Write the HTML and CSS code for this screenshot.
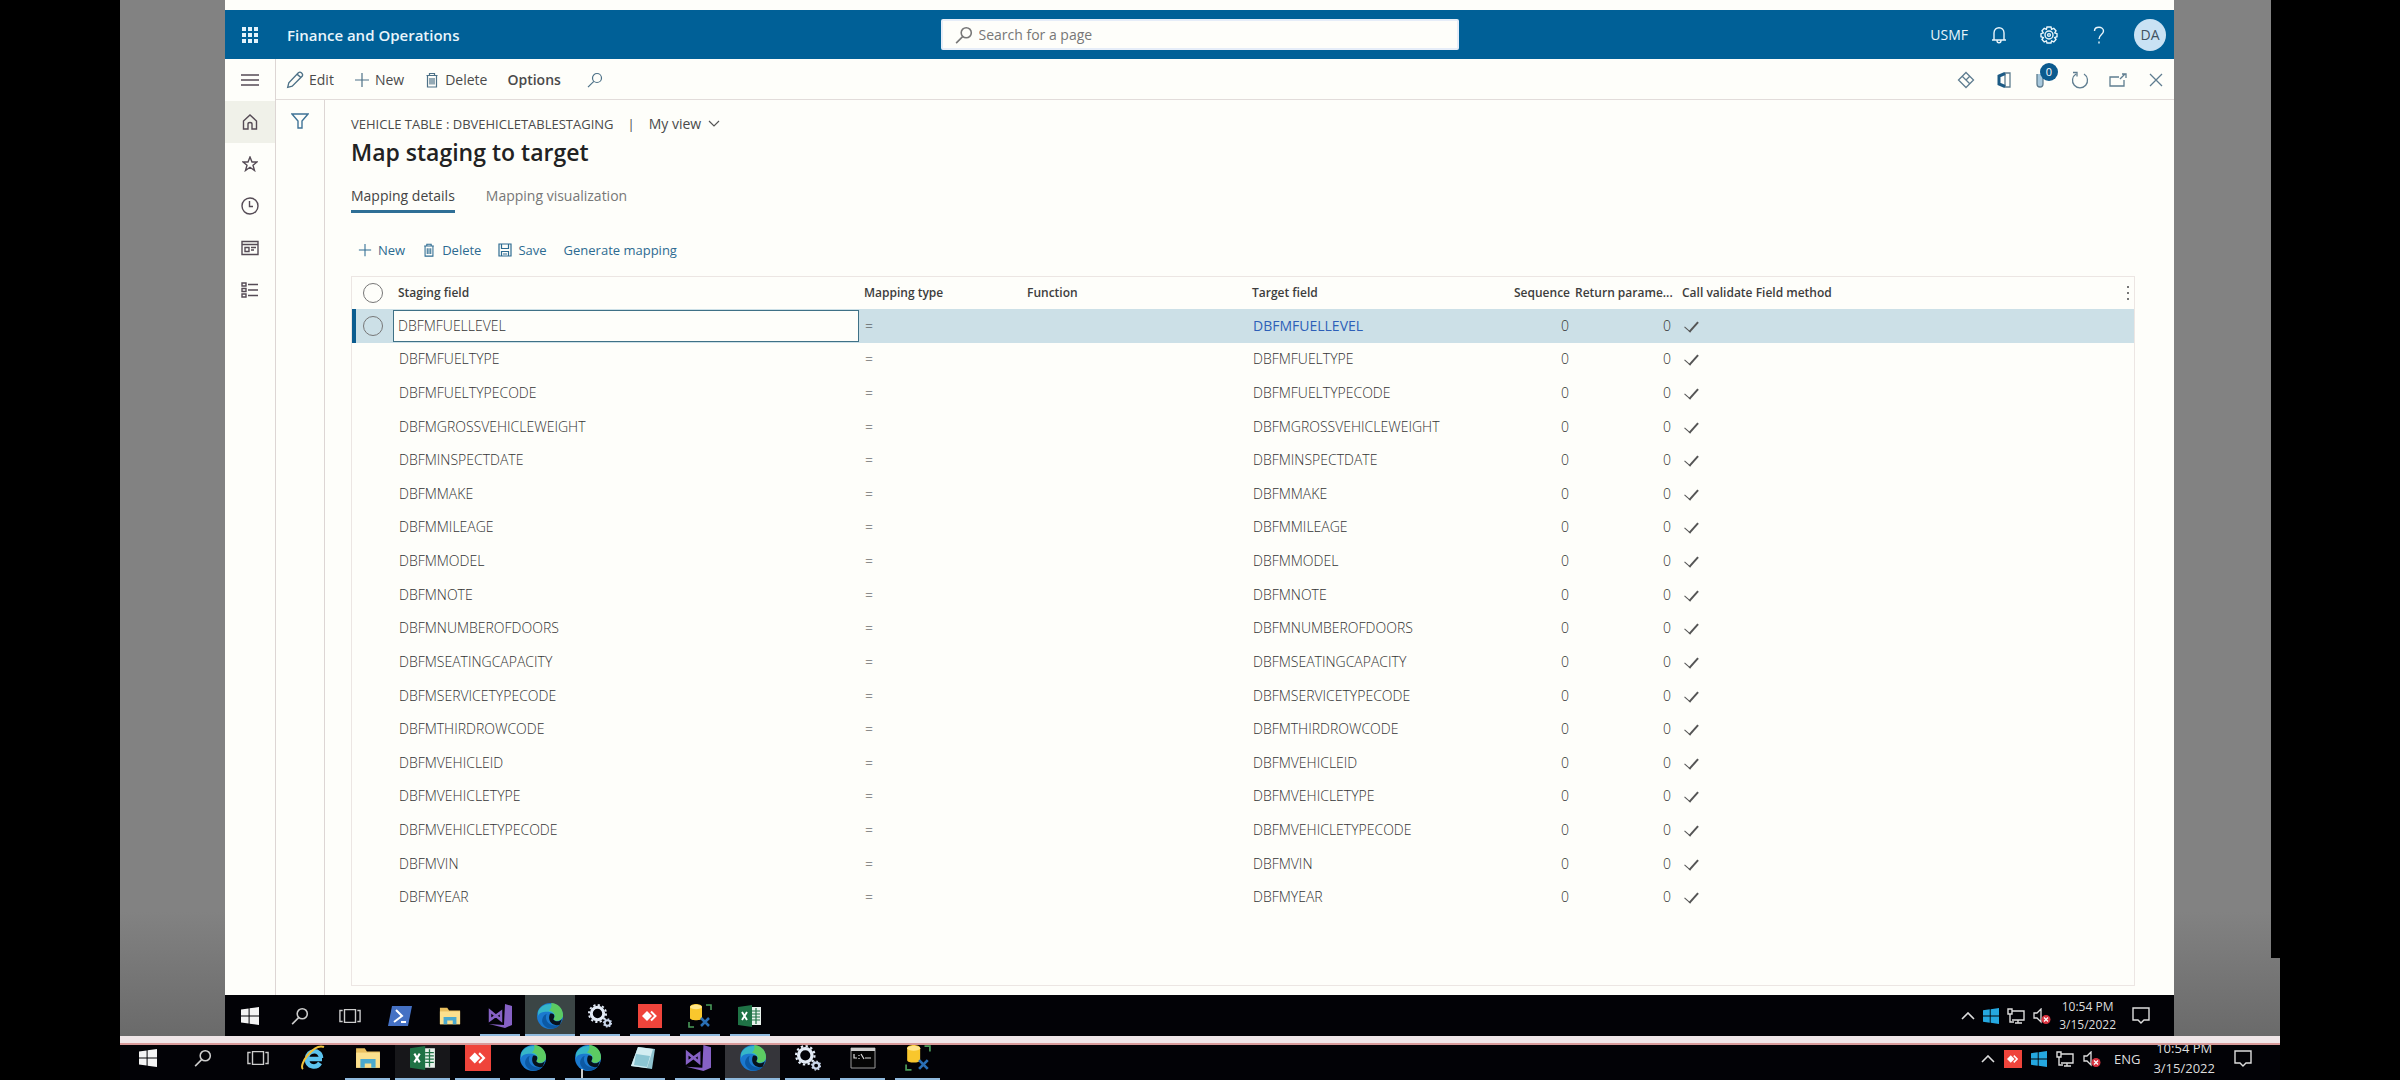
FILE: index.html
```html
<!DOCTYPE html>
<html lang="en">
<head>
<meta charset="utf-8">
<title>Map staging to target - Finance and Operations</title>
<link rel="stylesheet" href="styles.css">
</head>
<body>
<svg class="defs" aria-hidden="true">
  <symbol id="search" viewBox="0 0 16 16"><circle cx="10" cy="6" r="4.5"/><path d="M6.8 9.4 1 15.2"/></symbol>
  <symbol id="plus" viewBox="0 0 16 16"><path d="M8 1v14M1 8h14"/></symbol>
  <symbol id="trash" viewBox="0 0 16 16"><path d="M2.500 3.500h11M5.500 3.500v-2h5v2M3.500 3.500v11.500h9v-11.500M6 6v6.500M8 6v6.500M10 6v6.500"/></symbol>
  <symbol id="windows" viewBox="0 0 18 18"><path d="M0 2.500 7.600 1.400v7.100H0zM8.600 1.300 18 0v8.500H8.600zM0 9.500h7.600v7.100L0 15.500zM8.600 9.500H18V18l-9.400-1.300z"/></symbol>
  <symbol id="taskview" viewBox="0 0 24 18"><path d="M6 2h12v14H6zM4 3H1v12h3M20 3h3v12h-3" fill="none" stroke="#ccc" stroke-width="1.500"/></symbol>
  <symbol id="folder" viewBox="0 0 24 20"><path d="M1 1h8l2 3h12v15H1z" fill="#e9bf5f"/><path d="M1 5h22v14H1z" fill="#fbe08e"/><path d="M5 19v-8h14v8h-4v-4H9v4z" fill="#4aa9cf"/></symbol>
  <symbol id="vs" viewBox="0 0 24 24"><path d="M17 0l7 2v19l-7 3L1 20l15 1z" fill="#8661c5"/><path d="M2 7v9l11-8v8L2 7z" fill="none" stroke="#8661c5" stroke-width="2.500"/></symbol>
  <symbol id="edge" viewBox="0 0 24 24"><circle cx="12" cy="12" r="12" fill="#1b79cf"/><path d="M1 8C4-1 20-3 24 11c0 5-6 7-9 4 3-4-1-7-6-7-4 0-7 1-8 4z" fill="#35b6c8"/><path d="M13 0c6 0 11 5 11 11 0 5-6 7-9 4 3-3 1-7-4-8 2-2 3-4 2-7z" fill="#5ccb62"/><path d="M9 10c-3 6 3 13 12 10-5 6-14 4-16-2-1-3 1-7 4-8z" fill="#0c59a4"/><path d="M12 10c4-1 5 2 3 5 2 3 6 2 8 0l-2 5c-6 2-12-3-9-10z" fill="#07121c"/></symbol>
  <symbol id="gears" viewBox="0 0 24 24"><circle cx="9.500" cy="9.500" r="6.200" fill="none" stroke="#e3ebf6" stroke-width="3"/><circle cx="9.500" cy="9.500" r="8.500" fill="none" stroke="#e3ebf6" stroke-width="2" stroke-dasharray="2.200 2.250"/><circle cx="19.500" cy="19" r="2.800" fill="none" stroke="#c9d6ea" stroke-width="2"/><circle cx="19.500" cy="19" r="4" fill="none" stroke="#c9d6ea" stroke-width="1.400" stroke-dasharray="1.500 1.600"/></symbol>
  <symbol id="anydesk" viewBox="0 0 24 24"><path d="M0 0h24v24H0z" fill="#ef443b"/><path d="M4 12l5-5 5 5-5 5z" fill="#fff"/><path d="M13 7.500l4.500 4.500-4.500 4.500" fill="none" stroke="#fff" stroke-width="2"/></symbol>
  <symbol id="sql" viewBox="0 0 24 24"><path d="M2 3c0-4 12-4 12 0v11c0 3-12 3-12 0z" fill="#f9c72d"/><ellipse cx="8" cy="3" rx="6" ry="2.200" fill="#ffe58a"/><path d="M18 1h5v5M1 18v5h5" fill="none" stroke="#4b9a5a" stroke-width="1.600"/><path d="M13 14l8 8M21 14l-8 8" stroke="#2a6fb5" stroke-width="2.500"/></symbol>
  <symbol id="excel" viewBox="0 0 24 22"><path d="M13 2h10v18H13z" fill="#e8f2ec"/><path d="M14 6h8M14 9h8M14 12h8M14 15h8M18 3v16" stroke="#1f7245" stroke-width="1.200"/><path d="M0 2 14 0v22L0 20z" fill="#1f7245"/><path d="M4 7l5 8M9 7l-5 8" stroke="#fff" stroke-width="1.900"/></symbol>
  <symbol id="network" viewBox="0 0 18 16"><path d="M5 3h12v9H5M8 15h7M11 12v3M1 1h4v5H1zM3 6v8h4" fill="none" stroke="#ddd" stroke-width="1.400"/></symbol>
  <symbol id="mute" viewBox="0 0 18 16"><path d="M1 5h3l4-4v13L4 10H1z" fill="none" stroke="#ddd" stroke-width="1.300"/><circle cx="13" cy="11.500" r="4.500" fill="#d8323f"/><path d="M11 9.500l4 4M15 9.500l-4 4" stroke="#fff" stroke-width="1.200"/></symbol>
  <symbol id="up" viewBox="0 0 14 8"><path d="M1 7l6-6 6 6" fill="none" stroke="#ddd" stroke-width="1.600"/></symbol>
  <symbol id="note" viewBox="0 0 18 17"><path d="M1 1h16v12h-5l-3 3-3-3H1z" fill="none" stroke="#ddd" stroke-width="1.400"/></symbol>
</svg>

<div class="screen">
  <div class="desk">
    <div class="notch"></div>
    <div class="remote">
      <div class="chrome"></div>
      <header class="top">
        <div class="brand">
          <button class="waffle" aria-label="Apps"><svg width="18" height="18" viewBox="0 0 18 18"><path d="M3 1v16M9 1v16M15 1v16" stroke="#e4f3fb" stroke-width="4" stroke-dasharray="4 2"/></svg></button>
          <span class="name">Finance and Operations</span>
        </div>
        <label class="find">
          <svg class="line" width="18" height="18"><use href="#search"/></svg>
          <input type="text" placeholder="Search for a page" aria-label="Search for a page">
        </label>
        <div class="account">
          <button class="company">USMF</button>
          <button class="hicon" aria-label="Notifications"><svg width="16" height="18" viewBox="0 0 16 18"><path d="M1 14h14M3 14V7c0-7 10-7 10 0v7M6 14.500c0 3 4 3 4 0"/></svg></button>
          <button class="hicon" aria-label="Settings"><svg width="18" height="18" viewBox="0 0 18 18"><path d="M7 1h4l.6 2.300 2.200-1L16 4.800l-1.300 2 2.300.9v3l-2.300.8 1.300 2-2.200 2.400-2.200-1L11 17H7l-.6-2.100-2.200 1L2 13.500l1.300-2L1 10.700v-3l2.300-.9-1.300-2 2.200-2.500 2.200 1z"/><circle cx="9" cy="9" r="4"/><circle cx="9" cy="9" r="1.400"/></svg></button>
          <button class="hicon" aria-label="Help"><svg width="12" height="18" viewBox="0 0 12 18"><path d="M1.500 5c0-5 9-5 9 0 0 3.500-4.500 3.500-4.500 8M6 15.500v2"/></svg></button>
          <button class="avatar">DA</button>
        </div>
      </header>

      <div class="body">
        <nav class="rail">
          <button class="burger" aria-label="Expand"><svg width="18" height="12" viewBox="0 0 18 12"><path d="M0 1h18M0 6h18M0 11h18"/></svg></button>
          <button class="on" aria-label="Home"><svg width="16" height="16" viewBox="0 0 16 16"><path d="M1.500 7 8 1l6.500 6v8H10v-5c0-2-4-2-4 0v5H1.500z"/></svg></button>
          <button aria-label="Favorites"><svg width="16" height="16" viewBox="0 0 16 16"><path d="M8 1l2 5h5l-4 3.200 1.500 5.300L8 11.300 3.500 14.500 5 9.200 1 6h5z"/></svg></button>
          <button aria-label="Recent"><svg width="18" height="18" viewBox="0 0 18 18"><circle cx="9" cy="9" r="8"/><path d="M8.500 4v5.500H12"/></svg></button>
          <button aria-label="Workspaces"><svg width="18" height="16" viewBox="0 0 18 16"><path d="M1 1.500h16v13H1zM1 4.500h16M4 7.500h4v4H4zM10 7.500h5M10 10h3"/></svg></button>
          <button aria-label="Modules"><svg width="18" height="16" viewBox="0 0 18 16"><path d="M1 1h4v3H1zM1 6.500h4v3H1zM1 12h4v3H1zM7 2.500h10M7 8h10M7 13.500h10"/></svg></button>
        </nav>

        <div class="work">
          <div class="actions">
            <button class="act"><svg width="18" height="18" viewBox="0 0 16 16"><path d="M1.500 14.500l1-4L11 1.500c2-1.500 4.500 1 3.500 3L5.500 13.500zM10 3l3.500 3"/></svg>Edit</button>
            <button class="act"><svg width="16" height="16"><use href="#plus"/></svg>New</button>
            <button class="act"><svg width="16" height="18"><use href="#trash"/></svg>Delete</button>
            <button class="act strong">Options</button>
            <button class="act" aria-label="Search"><svg width="16" height="16"><use href="#search"/></svg></button>
            <div class="tools">
              <button aria-label="Personalize"><svg width="18" height="18" viewBox="0 0 18 18"><path d="M9 1.500 16.500 9 9 16.500 1.500 9z"/><path d="M5.200 5.200l7.600 7.600M12.800 5.200 9 9"/></svg></button>
              <button aria-label="Office"><svg width="16" height="16" viewBox="0 0 16 16"><path d="M9 1h5v14H9z"/><path d="M9 1.500 3 4v8l6 2.500" stroke="#1c5a84" stroke-width="3"/></svg></button>
              <button class="attach" aria-label="Attachments"><svg width="14" height="18" viewBox="0 0 14 18"><path d="M2 3v10c0 4 6 4 6 0V3" fill="#a9c9dd"/></svg><span class="badge">0</span></button>
              <button aria-label="Refresh"><svg width="18" height="18" viewBox="0 0 18 18"><path d="M5 3a7.500 7.500 0 1 0 8 0M2 1.500h4v4"/></svg></button>
              <button aria-label="Open in new window"><svg width="18" height="14" viewBox="0 0 18 14"><path d="M10 4H1v9h14V7M11 6l5-5M13 1h4v4"/></svg></button>
              <button aria-label="Close"><svg width="14" height="14" viewBox="0 0 14 14"><path d="M1 1l12 12M13 1 1 13"/></svg></button>
            </div>
          </div>

          <div class="page">
            <aside class="filter"><button aria-label="Filter"><svg width="18" height="16" viewBox="0 0 18 16"><path d="M1 1h16l-6 7v7H7V8z"/></svg></button></aside>
            <main>
              <div class="crumb"><span>VEHICLE TABLE : DBVEHICLETABLESTAGING</span><span>|</span><button class="view">My view<svg width="12" height="8" viewBox="0 0 12 8"><path d="M1 1l5 5 5-5"/></svg></button></div>
              <h1>Map staging to target</h1>
              <div class="tabs" role="tablist">
                <button role="tab" aria-selected="true" class="tab sel">Mapping details</button>
                <button role="tab" aria-selected="false" class="tab">Mapping visualization</button>
              </div>
              <div class="gridbar">
                <button><svg width="14" height="14"><use href="#plus"/></svg>New</button>
                <button><svg width="14" height="16"><use href="#trash"/></svg>Delete</button>
                <button><svg width="14" height="14" viewBox="0 0 14 14"><path d="M1 1h12v12H1zM3.500 1v4.500h7V1M3.500 13V8.500h7V13M5 11h4"/></svg>Save</button>
                <button>Generate mapping</button>
              </div>
              <div class="grid">
                <table>
                  <colgroup><col class="c0"><col class="c1"><col class="c2"><col class="c3"><col class="c4"><col class="c5"><col class="c6"><col></colgroup>
                  <thead><tr><th><input type="checkbox" class="pick" aria-label="Select all"></th><th>Staging field</th><th>Mapping type</th><th>Function</th><th>Target field</th><th class="num">Sequence</th><th class="num">Return parame...</th><th><div class="last">Call validate Field method<button aria-label="Grid options"><svg width="2" height="14" viewBox="0 0 2 14"><path d="M1 0v14" stroke-width="2" stroke-dasharray="2 4"/></svg></button></div></th></tr></thead>
                  <tbody>
                    <tr class="cur"><td><input type="checkbox" class="pick" aria-label="Select row"></td><td class="edit"><input type="text" value="DBFMFUELLEVEL" aria-label="Staging field"></td><td>=</td><td></td><td><a href="#">DBFMFUELLEVEL</a></td><td class="num">0</td><td class="num">0</td><td><input type="checkbox" class="ok" checked aria-label="Call validate"></td></tr>
                    <tr><td></td><td>DBFMFUELTYPE</td><td>=</td><td></td><td>DBFMFUELTYPE</td><td class="num">0</td><td class="num">0</td><td><input type="checkbox" class="ok" checked aria-label="Call validate"></td></tr>
                    <tr><td></td><td>DBFMFUELTYPECODE</td><td>=</td><td></td><td>DBFMFUELTYPECODE</td><td class="num">0</td><td class="num">0</td><td><input type="checkbox" class="ok" checked aria-label="Call validate"></td></tr>
                    <tr><td></td><td>DBFMGROSSVEHICLEWEIGHT</td><td>=</td><td></td><td>DBFMGROSSVEHICLEWEIGHT</td><td class="num">0</td><td class="num">0</td><td><input type="checkbox" class="ok" checked aria-label="Call validate"></td></tr>
                    <tr><td></td><td>DBFMINSPECTDATE</td><td>=</td><td></td><td>DBFMINSPECTDATE</td><td class="num">0</td><td class="num">0</td><td><input type="checkbox" class="ok" checked aria-label="Call validate"></td></tr>
                    <tr><td></td><td>DBFMMAKE</td><td>=</td><td></td><td>DBFMMAKE</td><td class="num">0</td><td class="num">0</td><td><input type="checkbox" class="ok" checked aria-label="Call validate"></td></tr>
                    <tr><td></td><td>DBFMMILEAGE</td><td>=</td><td></td><td>DBFMMILEAGE</td><td class="num">0</td><td class="num">0</td><td><input type="checkbox" class="ok" checked aria-label="Call validate"></td></tr>
                    <tr><td></td><td>DBFMMODEL</td><td>=</td><td></td><td>DBFMMODEL</td><td class="num">0</td><td class="num">0</td><td><input type="checkbox" class="ok" checked aria-label="Call validate"></td></tr>
                    <tr><td></td><td>DBFMNOTE</td><td>=</td><td></td><td>DBFMNOTE</td><td class="num">0</td><td class="num">0</td><td><input type="checkbox" class="ok" checked aria-label="Call validate"></td></tr>
                    <tr><td></td><td>DBFMNUMBEROFDOORS</td><td>=</td><td></td><td>DBFMNUMBEROFDOORS</td><td class="num">0</td><td class="num">0</td><td><input type="checkbox" class="ok" checked aria-label="Call validate"></td></tr>
                    <tr><td></td><td>DBFMSEATINGCAPACITY</td><td>=</td><td></td><td>DBFMSEATINGCAPACITY</td><td class="num">0</td><td class="num">0</td><td><input type="checkbox" class="ok" checked aria-label="Call validate"></td></tr>
                    <tr><td></td><td>DBFMSERVICETYPECODE</td><td>=</td><td></td><td>DBFMSERVICETYPECODE</td><td class="num">0</td><td class="num">0</td><td><input type="checkbox" class="ok" checked aria-label="Call validate"></td></tr>
                    <tr><td></td><td>DBFMTHIRDROWCODE</td><td>=</td><td></td><td>DBFMTHIRDROWCODE</td><td class="num">0</td><td class="num">0</td><td><input type="checkbox" class="ok" checked aria-label="Call validate"></td></tr>
                    <tr><td></td><td>DBFMVEHICLEID</td><td>=</td><td></td><td>DBFMVEHICLEID</td><td class="num">0</td><td class="num">0</td><td><input type="checkbox" class="ok" checked aria-label="Call validate"></td></tr>
                    <tr><td></td><td>DBFMVEHICLETYPE</td><td>=</td><td></td><td>DBFMVEHICLETYPE</td><td class="num">0</td><td class="num">0</td><td><input type="checkbox" class="ok" checked aria-label="Call validate"></td></tr>
                    <tr><td></td><td>DBFMVEHICLETYPECODE</td><td>=</td><td></td><td>DBFMVEHICLETYPECODE</td><td class="num">0</td><td class="num">0</td><td><input type="checkbox" class="ok" checked aria-label="Call validate"></td></tr>
                    <tr><td></td><td>DBFMVIN</td><td>=</td><td></td><td>DBFMVIN</td><td class="num">0</td><td class="num">0</td><td><input type="checkbox" class="ok" checked aria-label="Call validate"></td></tr>
                    <tr><td></td><td>DBFMYEAR</td><td>=</td><td></td><td>DBFMYEAR</td><td class="num">0</td><td class="num">0</td><td><input type="checkbox" class="ok" checked aria-label="Call validate"></td></tr>
                  </tbody>
                </table>
              </div>
            </main>
          </div>
        </div>
      </div>

      <div class="taskbar inner">
        <button aria-label="Start"><svg class="white" width="18" height="18"><use href="#windows"/></svg></button>
        <button aria-label="Search"><svg class="line" width="18" height="18"><use href="#search"/></svg></button>
        <button aria-label="Task view"><svg width="22" height="18"><use href="#taskview"/></svg></button>
        <button aria-label="PowerShell"><svg width="24" height="20" viewBox="0 0 24 20"><path d="M4 0h20l-4 20H0z" fill="#4571c4"/><path d="M8 4l6 6-8 6M13 16h5" fill="none" stroke="#fff" stroke-width="2"/></svg></button>
        <button aria-label="File Explorer"><svg width="22" height="20"><use href="#folder"/></svg></button>
        <button class="run" aria-label="Visual Studio"><svg width="24" height="24"><use href="#vs"/></svg></button>
        <button class="run active" aria-label="Edge"><svg width="26" height="26"><use href="#edge"/></svg></button>
        <button class="run" aria-label="Services"><svg width="24" height="24"><use href="#gears"/></svg></button>
        <button class="run" aria-label="AnyDesk"><svg width="24" height="24"><use href="#anydesk"/></svg></button>
        <button class="run" aria-label="SQL tools"><svg width="24" height="24"><use href="#sql"/></svg></button>
        <button class="run" aria-label="Excel"><svg width="24" height="22"><use href="#excel"/></svg></button>
        <div class="tray">
          <svg width="14" height="8"><use href="#up"/></svg>
          <svg class="cyan" width="16" height="16"><use href="#windows"/></svg>
          <svg width="18" height="16"><use href="#network"/></svg>
          <svg width="18" height="16"><use href="#mute"/></svg>
          <div class="clock"><span>10:54 PM</span><span>3/15/2022</span></div>
          <svg width="18" height="17"><use href="#note"/></svg>
        </div>
      </div>
    </div>
  </div>

  <div class="strip"></div>
  <div class="taskbar outer">
    <button aria-label="Start"><svg class="white" width="18" height="18"><use href="#windows"/></svg></button>
    <button aria-label="Search"><svg class="line" width="18" height="18"><use href="#search"/></svg></button>
    <button aria-label="Task view"><svg width="22" height="18"><use href="#taskview"/></svg></button>
    <button aria-label="Internet Explorer"><svg width="26" height="26" viewBox="0 0 26 26"><path d="M22 14H7M7 14c0-10 14-10 14-1M7 14c0 9 10 9 13 4" fill="none" stroke="#5cc3ee" stroke-width="4.500"/><path d="M3 24C-2 20 14-2 24 2" fill="none" stroke="#efc13b" stroke-width="2"/></svg></button>
    <button class="run" aria-label="File Explorer"><svg width="26" height="22"><use href="#folder"/></svg></button>
    <button class="run dim" aria-label="Excel"><svg width="26" height="24"><use href="#excel"/></svg></button>
    <button class="run" aria-label="AnyDesk"><svg width="26" height="26"><use href="#anydesk"/></svg></button>
    <button class="run" aria-label="Edge"><svg width="26" height="26"><use href="#edge"/></svg></button>
    <button class="run" aria-label="Edge Beta"><svg width="26" height="26"><use href="#edge"/></svg><i class="caret"></i></button>
    <button class="run" aria-label="Notepad"><svg width="26" height="24" viewBox="0 0 26 24"><path d="M8 1l17 2-3 20-21-3z" fill="#8fc3cf"/><path d="M8 1l15 2-6 19-16-2z" fill="#d3edf2"/><path d="M6 8l14 2-3 11-13-2z" fill="#8cc6d4"/></svg></button>
    <button class="run" aria-label="Visual Studio"><svg width="26" height="26"><use href="#vs"/></svg></button>
    <button class="run active" aria-label="Edge window"><svg width="28" height="26"><use href="#edge"/></svg></button>
    <button class="run" aria-label="Services"><svg width="26" height="26"><use href="#gears"/></svg></button>
    <button class="run" aria-label="Command Prompt"><svg width="26" height="22" viewBox="0 0 26 22"><path d="M1 1h24v20H1z" fill="#050505" stroke="#999"/><path d="M1 1h24v3H1z" fill="#ccc"/><path d="M4 7v4h3M9 8v1M9 11v1M11 7l3 5M15 11h6" fill="none" stroke="#ddd" stroke-width="1.200"/></svg></button>
    <button class="run" aria-label="SQL tools"><svg width="26" height="26"><use href="#sql"/></svg></button>
    <div class="tray">
      <svg width="14" height="8"><use href="#up"/></svg>
      <svg width="18" height="18"><use href="#anydesk"/></svg>
      <svg class="cyan" width="16" height="16"><use href="#windows"/></svg>
      <svg width="18" height="16"><use href="#network"/></svg>
      <svg width="18" height="16"><use href="#mute"/></svg>
      <span>ENG</span>
      <div class="clock"><span>10:54 PM</span><span>3/15/2022</span></div>
      <svg width="18" height="17"><use href="#note"/></svg>
    </div>
  </div>
</div>
</body>
</html>
```
FILE: styles.css
```css
* { box-sizing: border-box; }
body { margin: 0; background: #000; color: #4a4a4a; font: 14px/20px "Open Sans", "Noto Sans", sans-serif; }
button { display: flex; align-items: center; justify-content: center; margin: 0; padding: 0; border: 0; background: none; color: inherit; font: inherit; white-space: nowrap; }
svg { flex: none; display: block; }
.defs { position: absolute; width: 0; height: 0; }

.screen { display: flex; flex-direction: column; min-height: 100vh; margin: 0 120px; }
.desk { position: relative; display: flex; flex: 1; padding: 0 106px 0 105px; background: linear-gradient(#828282, #828282 88%, #6a6a6a); }
.notch { position: absolute; top: 0; right: 0; width: 9px; height: 958px; background: #000; }
.remote { display: flex; flex: 1; flex-direction: column; min-width: 0; background: #fefefa; }
.chrome { height: 10px; }

/* Blue application header */
.top { display: grid; grid-template-columns: 1fr 518px 1fr; align-items: center; height: 49px; background: #006097; color: #e9f5fb; }
.brand { display: flex; align-items: center; }
.waffle { width: 50px; }
.name { margin-left: 12px; font-size: 15px; font-weight: 600; }
.find { display: flex; align-items: center; gap: 6px; height: 31px; padding-left: 12px; border: 2px solid #e6edf8; border-radius: 2px; background: #fefefa; color: #777; }
.find input { flex: 1; min-width: 0; padding: 0; border: 0; outline: 0; background: none; font: inherit; }
.find input::placeholder { color: #777; opacity: 1; }
.account { display: flex; align-items: center; justify-content: flex-end; padding-right: 8px; }
.company { margin-right: 6px; }
.hicon { width: 50px; }
.hicon svg, .line { fill: none; stroke: currentColor; stroke-width: 1.400; }
.avatar { width: 32px; height: 32px; margin-left: 10px; border-radius: 50%; background: #c9e2f4; color: #3f5262; }

.body { display: flex; flex: 1; }
.rail { display: flex; flex-direction: column; width: 51px; border-right: 1px solid #ddd6d4; }
.rail button { height: 42px; }
.rail .burger { height: 42px; }
.rail .on { background: #f0f1e9; }
.rail svg { fill: none; stroke: #554b55; stroke-width: 1.400; }
.work { display: flex; flex: 1; flex-direction: column; min-width: 0; }

.actions { display: flex; align-items: center; gap: 20px; height: 41px; padding: 2px 6px 0 10px; border-bottom: 1px solid #e2dcda; }
.act { gap: 5px; }
.act svg { fill: none; stroke: #4d7187; stroke-width: 1.200; }
.act.strong { font-weight: 600; }
.act:nth-child(5) { margin-left: 6px; }
.tools { display: flex; gap: 14px; margin-left: auto; }
.tools button { width: 24px; height: 24px; }
.tools svg { fill: none; stroke: #5f7d90; stroke-width: 1.300; }
.attach { position: relative; }
.badge { position: absolute; top: -5px; left: 10px; width: 18px; height: 18px; border-radius: 50%; background: #0b5a8e; color: #fff; font-size: 11px; line-height: 18px; }

.page { display: flex; flex: 1; }
.filter { width: 49px; padding-top: 12px; border-right: 1px solid #ddd6d4; }
.filter button { width: 100%; height: 18px; }
.filter svg { fill: none; stroke: #3f7396; stroke-width: 1.400; }
main { display: flex; flex: 1; flex-direction: column; min-width: 0; padding: 14px 39px 9px 26px; }
.crumb { display: flex; gap: 14px; font-size: 13px; }
.view { gap: 7px; font-size: 14px; }
.view svg { fill: none; stroke: #555; stroke-width: 1.200; }
h1 { margin: 0; color: #222; font-size: 23px; font-weight: 600; line-height: 36px; }
.tabs { display: flex; gap: 31px; margin-top: 15px; }
.tab { height: 28px; padding-bottom: 4px; border-bottom: 3px solid transparent; color: #777; }
.tab.sel { border-color: #2f6f96; color: #444; }
.gridbar { display: flex; gap: 17px; height: 20px; margin: 27px 0 16px; padding-left: 7px; color: #2d6b91; font-size: 13px; }
.gridbar button { gap: 6px; }
.gridbar svg { fill: none; stroke: #2d6b91; stroke-width: 1.200; }

.grid { flex: 1; border: 1px solid #ece6e3; }
table { width: 100%; height: 637px; border-collapse: collapse; table-layout: fixed; }
.c0 { width: 39px; }
.c1 { width: 466px; }
.c2 { width: 163px; }
.c3 { width: 225px; }
.c4 { width: 255px; }
.c5 { width: 73px; }
.c6 { width: 102px; }
th, td { padding: 0 5px; overflow: hidden; text-align: left; white-space: nowrap; }
td { height: 33px; padding: 0 6px; color: #333; font-size: 14px; font-weight: 300; }
th { height: 32px; color: #3d3d3d; font-size: 12px; font-weight: 600; }
th:first-child, td:first-child { padding: 0 0 0 9px; }
th.num, td.num { padding-left: 0; text-align: right; }
.cur { background: #cce0e7; }
.cur td:first-child { border-left: 4px solid #0b5c8f; padding-left: 7px; }
.cur a { color: #2d5fb8; font-weight: 400; text-decoration: none; }
.cur .edit { padding: 0; }
.edit input { display: block; width: 100%; height: 32px; padding: 0 4px; border: 1px solid #3f7186; border-radius: 0; outline: 0; background: #fefefa; color: #333; font: inherit; }
.last { display: flex; justify-content: space-between; }
.last svg { fill: none; stroke: #777; }
.pick { display: block; appearance: none; width: 20px; height: 20px; margin: 0; border: 1px solid #777; border-radius: 50%; }
.ok { display: block; appearance: none; width: 16px; height: 16px; margin: 0; }
.ok::before { content: ""; display: block; width: 12px; height: 6px; margin: 3px 2px; border: solid #555; border-width: 0 0 2px 2px; border-left-width: 1px; transform: rotate(-48deg); }

/* Taskbars */
.taskbar { display: flex; color: #ddd; background: #020206; }
.taskbar > button { position: relative; width: 50px; height: 100%; }
.taskbar .line { color: #ccc; }
.inner { height: 41px; }
.white { fill: #f4f4f4; }
.cyan { fill: #25a8e0; }
.run::after { content: ""; position: absolute; right: 5px; bottom: 0; left: 5px; height: 2px; background: #8fb9dd; }
.taskbar .active { background: #3b4545; }
.taskbar .dim { background: #17171a; }
.active::after, .dim::after { right: 0; left: 0; }
.strip { height: 9px; border-bottom: 2px solid #d99a9a; background: #f0e6e8; }
.outer { height: 35px; overflow: hidden; }
.outer > button { width: 55px; padding-bottom: 9px; }
.outer .active { background: #35353a; }
.caret { position: absolute; bottom: 0; left: 21px; width: 2px; height: 11px; background: #ccc; }
.tray { display: flex; align-items: center; gap: 8px; margin-left: auto; padding-right: 24px; font-size: 12px; }
.clock { display: flex; flex-direction: column; align-items: center; line-height: 18px; }
.inner .clock { margin-right: 8px; }
.outer .tray { align-items: flex-end; gap: 9px; padding-right: 28px; }
.outer .tray > svg { align-self: center; margin-bottom: 8px; }
.outer .tray > span { align-self: center; margin: 0 4px 8px; font-size: 13px; }
.outer .clock { padding-bottom: 2px; margin-right: 10px; font-size: 13px; line-height: 20px; }
```
